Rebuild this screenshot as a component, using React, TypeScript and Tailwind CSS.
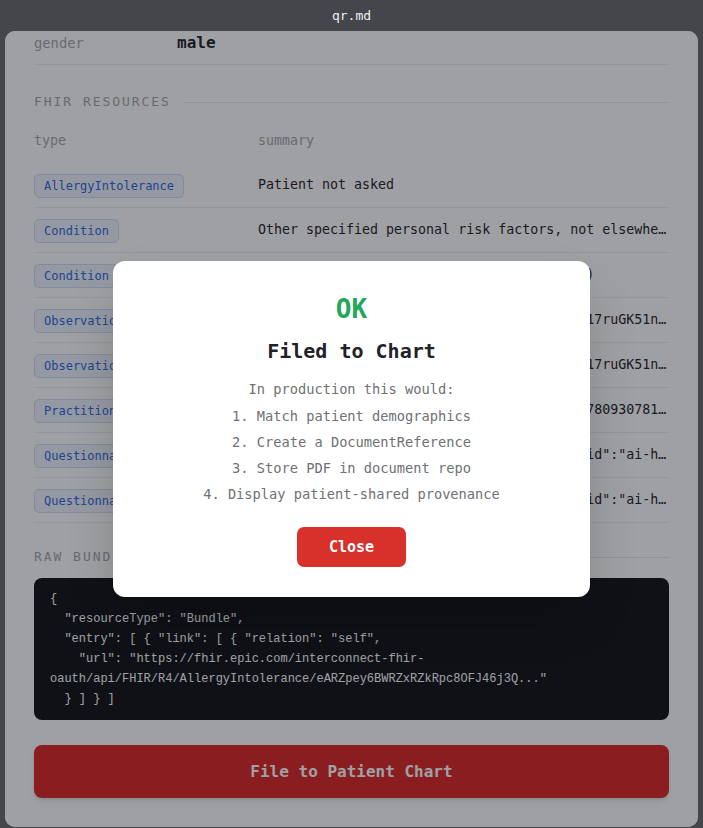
const mono = "font-['DejaVu_Sans_Mono','Liberation_Mono',monospace]";

type Row = { type: string; summary: string };

const rows: Row[] = [
  { type: "AllergyIntolerance", summary: "Patient not asked" },
  {
    type: "Condition",
    summary: "Other specified personal risk factors, not elsewhere classified",
  },
  { type: "Condition", summary: "Body mass index 40.0-44.9, adult (finding)" },
  {
    type: "Observation",
    summary: '{"resourceType":"Observation","id":"eSq0Z17ruGK51nQ2vXb3"}',
  },
  {
    type: "Observation",
    summary: '{"resourceType":"Observation","id":"eTm4W17ruGK51nR8kLp0"}',
  },
  {
    type: "Practitioner",
    summary: '{"resourceType":"Practitioner","id":"eM5k780930781x2Q"}',
  },
  {
    type: "QuestionnaireResponse",
    summary: '{"resourceType":"QuestionnaireResponse","id":"ai-health-intake-01"}',
  },
  {
    type: "QuestionnaireResponse",
    summary: '{"resourceType":"QuestionnaireResponse","id":"ai-health-intake-02"}',
  },
];

const bundle = `{
  "resourceType": "Bundle",
  "entry": [ { "link": [ { "relation": "self",
    "url": "https://fhir.epic.com/interconnect-fhir-
oauth/api/FHIR/R4/AllergyIntolerance/eARZpey6BWRZxRZkRpc8OFJ46j3Q..."
  } ] } ]`;

function SectionTitle({ label }: { label: string }) {
  return (
    <div className="flex items-center gap-[13px]">
      <span className="text-[13px] leading-[20px] tracking-[0.15em] text-[#a3a6ad]">{label}</span>
      <div className="h-px flex-1 bg-[#e6e8ec]" />
    </div>
  );
}

function FiledModal() {
  return (
    <div className="w-[477px] rounded-[12px] bg-white px-8 pt-8 pb-[30px] text-center shadow-2xl">
      <div className="text-[26px] leading-[32px] font-bold text-[#1fa75a]">OK</div>
      <div className="mt-3 text-[20px] leading-[28px] font-bold text-[#1f2328]">Filed to Chart</div>
      <p className="mt-[14px] text-[13.7px] leading-[20px] text-[#6f7175]">In production this would:</p>
      <div className="mt-1 text-[13.7px] leading-[26px] text-[#6f7175]">
        <div>1. Match patient demographics</div>
        <div>2. Create a DocumentReference</div>
        <div>3. Store PDF in document repo</div>
        <div>4. Display patient-shared provenance</div>
      </div>
      <button className="mt-5 h-10 rounded-[7px] bg-[#d8302a] px-8 text-[15px] font-bold text-white">
        Close
      </button>
    </div>
  );
}

export default function App() {
  return (
    <div className={`flex h-[828px] w-[703px] flex-col bg-[#45464b] ${mono}`}>
      <div className="flex h-[31px] items-center justify-center text-[13px] text-[#f0f0f2]">qr.md</div>
      <div className="relative mx-[5px] mb-[1px] flex-1 overflow-hidden rounded-[10px] bg-white">
        <div className="px-[29px] pt-[2px]">
          <div className="flex items-center border-b border-[#eceef1] pb-[11px]">
            <span className="w-[143px] text-[13.8px] leading-[20px] text-[#a3a6ad]">gender</span>
            <span className="text-[16px] leading-[20px] font-bold text-[#1f2328]">male</span>
          </div>

          <div className="mt-[27px]">
            <SectionTitle label="FHIR RESOURCES" />
          </div>

          <div className="mt-[19px] grid grid-cols-[224px_1fr] pb-3 text-[13.3px] leading-[20px] text-[#a3a6ad]">
            <span>type</span>
            <span>summary</span>
          </div>

          {rows.map((r, i) => (
            <div
              key={i}
              className="grid h-[45px] grid-cols-[224px_1fr] items-center border-b border-[#eceef1]"
            >
              <div>
                <span className="inline-block rounded-[5px] border border-[#cfdcf5] bg-[#eff4ff] px-[9px] py-[3px] text-[12px] leading-[16px] text-[#2f66dc]">
                  {r.type}
                </span>
              </div>
              <div className="truncate text-[13.3px] text-[#1f2328]">{r.summary}</div>
            </div>
          ))}

          <div className="mt-[24px]">
            <SectionTitle label="RAW BUNDLE" />
          </div>

          <pre className="mt-[11px] h-[142px] overflow-hidden rounded-[8px] bg-[#0f1216] px-4 py-[11px] text-[12px] leading-[20px] whitespace-pre text-white">
            {bundle}
          </pre>

          <button className="mt-[25px] h-[53px] w-full rounded-[8px] bg-[#dc2626] text-[16px] font-bold text-white shadow-md">
            File to Patient Chart
          </button>
        </div>

        <div className="absolute inset-0 flex items-center justify-center bg-[rgba(15,17,25,0.4)]">
          <FiledModal />
        </div>
      </div>
    </div>
  );
}
